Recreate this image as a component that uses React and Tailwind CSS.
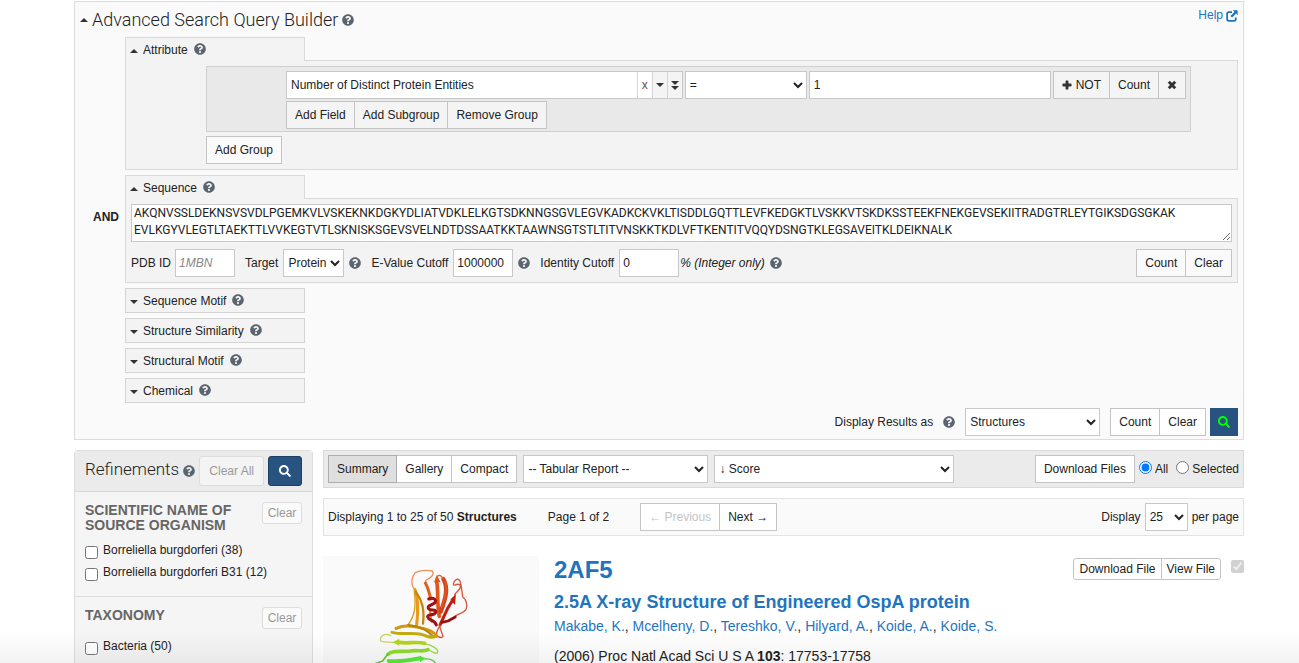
import React from "react";
import { FaQuestionCircle, FaSearch } from "react-icons/fa";

const SEQUENCE = [
  "AKQNVSSLDEKNSVSVDLPGEMKVLVSKEKNKDGKYDLIATVDKLELKGTSDKNNGSGVLEGVKADKCKVKLTISDDLGQTTLEVFKEDGKTLVSKKVTSKDKSSTEEKFNEKGEVSEKIITRADGTRLEYTGIKSDGSGKAK",
  "EVLKGYVLEGTLTAEKTTLVVKEGTVTLSKNISKSGEVSVELNDTDSSAATKKTAAWNSGTSTLTITVNSKKTKDLVFTKENTITVQQYDSNGTKLEGSAVEITKLDEIKNALK",
].join("\n");

const btn = "h-7 shrink-0 whitespace-nowrap border border-[#c4c4c4] px-2";
const field = "h-7 border border-[#c8c8c8] bg-white";
const select = "h-7 border border-[#c8c8c8] bg-white";
const heading = "font-['Roboto','Liberation_Sans',sans-serif]";

function HelpIcon({ label }) {
  return (
    <button type="button" aria-label={label} className="shrink-0 text-[#5b6570]">
      <FaQuestionCircle className="size-3" />
    </button>
  );
}

function PlusIcon() {
  return (
    <svg viewBox="0 0 10 10" className="size-[10px]" fill="#333" aria-hidden="true">
      <path d="M3.6 1.1Q3.6 .5 4.2 .5H5.8Q6.4 .5 6.4 1.1V3.6H8.9Q9.5 3.6 9.5 4.2V5.8Q9.5 6.4 8.9 6.4H6.4V8.9Q6.4 9.5 5.8 9.5H4.2Q3.6 9.5 3.6 8.9V6.4H1.1Q.5 6.4 .5 5.8V4.2Q.5 3.6 1.1 3.6H3.6Z" />
    </svg>
  );
}

function RemoveIcon() {
  return (
    <svg viewBox="0 0 10 10" className="size-[10px]" stroke="#333" strokeWidth="2.9" aria-hidden="true">
      <path d="M1.8 1.8L8.2 8.2M8.2 1.8L1.8 8.2" />
    </svg>
  );
}

function ExternalIcon() {
  return (
    <svg viewBox="0 0 13 13" className="size-3" fill="none" aria-hidden="true">
      <path d="M6.5 2.3H3.2Q1.2 2.3 1.2 4.3V9.8Q1.2 11.8 3.2 11.8H8.6Q10.6 11.8 10.6 9.8V8" stroke="currentColor" strokeWidth="1.9" />
      <path d="M7.4 .4H12.6V5.6L10.9 3.9L6.6 8.2L4.8 6.4L9.1 2.1Z" fill="currentColor" />
    </svg>
  );
}

function Caret({ up = false }) {
  return (
    <svg viewBox="0 0 8 4" className="h-1 w-2 shrink-0" fill="#333" aria-hidden="true">
      <path d={up ? "M0 4L4 0L8 4Z" : "M0 0H8L4 4Z"} />
    </svg>
  );
}

function TabLabel({ label, open }) {
  return (
    <div className="flex items-start gap-[6px]">
      <button type="button" aria-expanded={open} className="flex items-center gap-[5px] pt-px">
        <Caret up={open} />
        <span>{label}</span>
      </button>
      <div className="flex h-4 items-center">
        <HelpIcon label={"About " + label} />
      </div>
    </div>
  );
}

function OpenSection({ label, children }) {
  return (
    <section>
      <div className="flex">
        <div className="h-6 w-[180px] border-x border-t border-[#dadada] bg-[#f3f3f3] px-1 pt-[3px]">
          <TabLabel label={label} open />
        </div>
        <div className="flex-1 border-b border-[#dadada]" />
      </div>
      <div className="border-x border-b border-[#dadada] bg-[#f3f3f3] p-[5px]">{children}</div>
    </section>
  );
}

function AttributeSection() {
  return (
    <OpenSection label="Attribute">
      <div className="ml-[75px] mr-[41px]">
        <div className="flex flex-col gap-[2px] border border-[#cfcfcf] bg-[#e9e9e9] pt-1 pr-1 pb-[2px] pl-[79px]">
          <div className="flex gap-[2px]">
            <div className="flex h-7 flex-[395] border border-[#c8c8c8] bg-white">
              <input aria-label="Attribute" defaultValue="Number of Distinct Protein Entities" className="min-w-0 flex-1 px-1" />
              <button type="button" aria-label="Clear attribute" className="w-[15px] border-l border-[#d5d5d5] text-[#555]">x</button>
              <button type="button" aria-label="Choose attribute" className="flex w-[15px] items-center justify-center border-l border-[#d5d5d5] bg-[#f4f4f4]">
                <Caret />
              </button>
              <button type="button" aria-label="All attributes" className="flex w-[15px] flex-col items-center justify-center gap-px border-l border-[#d5d5d5] bg-[#f4f4f4]">
                <Caret />
                <Caret />
              </button>
            </div>
            <select aria-label="Operator" className={select + " w-[122px]"}>
              <option>=</option>
            </select>
            <input aria-label="Value" defaultValue="1" className={field + " min-w-0 flex-[232] px-1"} />
            <div className="flex">
              <button type="button" className={btn + " flex items-center gap-1 bg-[#f4f4f4]"}>
                <PlusIcon /> NOT
              </button>
              <button type="button" className={btn + " -ml-px bg-[#f4f4f4]"}>Count</button>
              <button type="button" aria-label="Remove field" className={btn + " -ml-px bg-[#f4f4f4]"}>
                <RemoveIcon />
              </button>
            </div>
          </div>
          <div className="flex">
            <button type="button" className={btn + " bg-[#f4f4f4]"}>Add Field</button>
            <button type="button" className={btn + " -ml-px bg-[#f4f4f4]"}>Add Subgroup</button>
            <button type="button" className={btn + " -ml-px bg-[#f4f4f4]"}>Remove Group</button>
          </div>
        </div>
        <button type="button" className={btn + " mt-1 block bg-[#fafafa]"}>Add Group</button>
      </div>
    </OpenSection>
  );
}

function SequenceSection() {
  return (
    <div className="relative">
      <strong className="absolute top-[34px] -left-8">AND</strong>
      <OpenSection label="Sequence">
        <textarea
          aria-label="Sequence"
          defaultValue={SEQUENCE}
          className={heading + " block h-[38px] w-full resize-y overflow-hidden border border-[#c8c8c8] bg-white px-[2px] leading-[17px] break-all"}
        />
        <div className="mt-[7px] flex items-center">
          <label htmlFor="pdb">PDB ID</label>
          <input id="pdb" placeholder="1MBN" className={field + " ml-1 w-[60px] px-[3px] placeholder:text-[#888] placeholder:italic"} />
          <label htmlFor="target" className="ml-[10px]">Target</label>
          <select id="target" className={select + " mr-[5px] ml-[5px] w-[61px]"}>
            <option>Protein</option>
          </select>
          <HelpIcon label="About target" />
          <label htmlFor="evalue" className="ml-[10px]">E-Value Cutoff</label>
          <input id="evalue" defaultValue="1000000" className={field + " mr-[5px] ml-[5px] w-[60px] px-[3px]"} />
          <HelpIcon label="About e-value" />
          <label htmlFor="identity" className="ml-[10px]">Identity Cutoff</label>
          <input id="identity" defaultValue="0" className={field + " ml-[5px] w-[60px] px-[3px]"} />
          <em className="mr-[5px] pl-px">% (Integer only)</em>
          <HelpIcon label="About identity" />
          <div className="ml-auto flex">
            <button type="button" className={btn + " bg-[#fafafa]"}>Count</button>
            <button type="button" className={btn + " -ml-px bg-[#fafafa]"}>Clear</button>
          </div>
        </div>
      </OpenSection>
    </div>
  );
}

function QueryBuilder() {
  return (
    <section className="border border-[#ddd] bg-[#fafafa] px-[5px] pb-[3px]">
      <header className="flex h-[35px] items-start justify-between">
        <div className="flex items-center gap-1 pt-[5px]">
          <Caret up />
          <h1 className={heading + " text-lg leading-[26px] font-light"}>Advanced Search Query Builder</h1>
          <HelpIcon label="About the query builder" />
        </div>
        <a href="#help" className="flex items-center gap-[3px] pt-[5px] text-[#1f75bd]">
          Help <ExternalIcon />
        </a>
      </header>
      <div className="ml-[45px] flex flex-col gap-[5px]">
        <AttributeSection />
        <SequenceSection />
        {["Sequence Motif", "Structure Similarity", "Structural Motif", "Chemical"].map((name) => (
          <div key={name} className="h-[25px] w-[180px] border border-[#d4d4d4] bg-[#f3f3f3] px-1 pt-[3px]">
            <TabLabel label={name} open={false} />
          </div>
        ))}
        <div className="flex items-center justify-end">
          <label htmlFor="results-as" className="mr-[10px]">Display Results as</label>
          <HelpIcon label="About result types" />
          <select id="results-as" className={select + " ml-[10px] w-[135px]"}>
            <option>Structures</option>
          </select>
          <button type="button" className={btn + " ml-[10px] bg-white"}>Count</button>
          <button type="button" className={btn + " mr-1 -ml-px bg-white"}>Clear</button>
          <button type="button" aria-label="Search" className="flex size-7 items-center justify-center bg-[#28527f] text-[#0f0]">
            <FaSearch className="size-3" />
          </button>
        </div>
      </div>
    </section>
  );
}

function Refinement({ title, items }) {
  return (
    <section className="border-b border-[#ddd] px-[10px] pt-[10px] pb-[13px]">
      <div className="mb-[6px] flex items-start justify-between">
        <h3 className="pt-px text-sm leading-[15px] font-bold text-[#666]">{title}</h3>
        <button type="button" className="h-[22px] w-10 shrink-0 rounded-[3px] border border-[#ddd] bg-[#fafafa] text-[#999]">Clear</button>
      </div>
      {items.map((item) => (
        <label key={item} className="flex h-[22px] items-center gap-[5px]">
          <input type="checkbox" className="mt-1 size-[13px]" /> {item}
        </label>
      ))}
    </section>
  );
}

function Refinements() {
  return (
    <aside className="w-[239px] shrink-0 rounded-t border border-[#ddd] bg-[#f5f5f5]">
      <header className="flex h-[41px] items-center border-b border-[#d8d8d8] bg-[#ebebeb] px-[10px]">
        <h2 className={heading + " mr-1 pb-1 text-[17px] leading-6 font-light"}>Refinements</h2>
        <HelpIcon label="About refinements" />
        <button type="button" className="ml-auto h-[30px] shrink-0 rounded-[3px] border border-[#ddd] bg-[#f4f4f4] px-[9px] text-[#999]">Clear All</button>
        <button type="button" aria-label="Apply refinements" className="ml-1 flex h-[30px] w-[34px] items-center justify-center rounded-[3px] border border-[#1c3f66] bg-[#28527f] text-white">
          <FaSearch className="size-3" />
        </button>
      </header>
      <Refinement title={<>SCIENTIFIC NAME OF<br />SOURCE ORGANISM</>} items={["Borreliella burgdorferi (38)", "Borreliella burgdorferi B31 (12)"]} />
      <Refinement title="TAXONOMY" items={["Bacteria (50)"]} />
    </aside>
  );
}

function Toolbar() {
  return (
    <div className="flex h-[38px] items-center border border-[#dadada] bg-[#ebebeb] px-1">
      <button type="button" aria-pressed="true" className="h-7 border border-[#adadad] bg-[#dfdfdf] px-2">Summary</button>
      <button type="button" className={btn + " border-l-0 bg-white"}>Gallery</button>
      <button type="button" className={btn + " -ml-px bg-white"}>Compact</button>
      <select aria-label="Tabular report" className={select + " ml-[6px] w-[185px]"}>
        <option>-- Tabular Report --</option>
      </select>
      <select aria-label="Sort by" className={select + " ml-[6px] w-[240px]"}>
        <option>↓ Score</option>
      </select>
      <button type="button" className={btn + " mr-1 ml-auto bg-white"}>Download Files</button>
      <label className="flex items-center gap-[3px]">
        <input type="radio" name="files" defaultChecked className="mb-1 size-[13px]" /> All
      </label>
      <label className="ml-2 flex items-center gap-[3px]">
        <input type="radio" name="files" className="mb-1 size-[13px]" /> Selected
      </label>
    </div>
  );
}

function Pager() {
  return (
    <div className="mt-[10px] flex h-[38px] items-center border border-[#e3e3e3] bg-[#fafafa] px-1">
      <span className="mr-[31px]">Displaying 1 to 25 of 50 <strong>Structures</strong></span>
      <span className="mr-[31px]">Page 1 of 2</span>
      <button type="button" disabled className={btn + " bg-white text-[#c4c4c4]"}>← Previous</button>
      <button type="button" className={btn + " -ml-px bg-white"}>Next →</button>
      <label htmlFor="per-page" className="mr-1 ml-auto">Display</label>
      <select id="per-page" className={select + " mr-1 w-[43px]"}>
        <option>25</option>
      </select>
      <span>per page</span>
    </div>
  );
}

function ProteinRibbon() {
  return (
    <svg viewBox="9 333 648 648" className="size-[216px] shrink-0 bg-[#fafafa]" fill="none" strokeLinecap="round" strokeLinejoin="round" role="img" aria-label="Ribbon view of 2AF5">
      <path d="M283 432C270 415 276 394 286 383C296 376 320 375 337 378C343 386 336 395 328 400C317 404 313 408 320 418" stroke="#f0905a" strokeWidth="4" />
      <path d="M285 434C294 458 296 486 290 540" stroke="#e89a18" strokeWidth="9" />
      <path d="M287 440C306 466 314 490 309 536" stroke="#c98310" strokeWidth="7" />
      <path d="M283 440C288 480 286 510 264 540L228 552" stroke="#d6a018" strokeWidth="4" />
      <path d="M316 414C325 430 328 442 332 462" stroke="#e0601c" strokeWidth="9" />
      <path d="M330 500L334 530" stroke="#d87c30" strokeWidth="6" />
      <path d="M350 410C356 440 350 480 358 514" stroke="#e2561a" strokeWidth="11" />
      <path d="M342 412L350 390L362 412Z" fill="#e2561a" />
      <path d="M370 402C384 426 380 454 362 500" stroke="#d2441a" strokeWidth="13" />
      <path d="M352 394C358 388 364 392 370 402" stroke="#e0602e" strokeWidth="4" />
      <path d="M376 410C382 430 378 456 364 488" stroke="#f07040" strokeWidth="2" />
      <path d="M326 462C340 456 352 464 344 474C334 482 322 480 325 490C330 500 350 490 347 502C342 514 322 504 323 516C326 528 344 522 349 540" stroke="#9e1212" strokeWidth="9" />
      <path d="M400 462L384 488L360 540" stroke="#c41c10" strokeWidth="9" />
      <path d="M391 464L408 446L405 480Z" fill="#c41c10" />
      <path d="M404 448C414 436 426 430 420 420C410 412 402 426 400 418C402 404 414 398 420 408C426 428 426 442 428 456C438 462 444 480 438 494C430 506 414 506 405 514" stroke="#d5553c" strokeWidth="4" />
      <path d="M406 516L384 528L366 532" stroke="#931010" strokeWidth="8" />
      <path d="M360 542C350 556 346 570 354 574C364 580 374 578 366 566L359 544" stroke="#cf553d" strokeWidth="4" />
      <path d="M228 550C250 540 276 542 300 548C322 554 342 558 350 574" stroke="#d19a12" strokeWidth="9" />
      <path d="M265 540C290 542 318 552 342 576" stroke="#b98208" strokeWidth="6" />
      <path d="M216 562C244 570 276 562 304 568C320 574 334 580 346 574" stroke="#c2ac12" strokeWidth="9" />
      <path d="M212 572C194 562 178 574 182 588C196 594 208 590 220 592" stroke="#c9d65a" strokeWidth="4" />
      <path d="M234 591C260 598 286 588 314 595" stroke="#b5d51c" strokeWidth="11" />
      <path d="M218 592L238 581L238 602Z" fill="#b5d51c" />
      <path d="M314 596C336 600 360 614 352 624C344 628 338 618 326 616" stroke="#a4dc4a" strokeWidth="4" />
      <path d="M204 628C216 614 242 622 270 618C292 614 310 622 324 614" stroke="#8fdc2c" strokeWidth="11" />
      <path d="M204 626L188 648L164 656" stroke="#65cc30" strokeWidth="5" />
      <path d="M206 648C232 650 270 646 300 640" stroke="#5ae83a" strokeWidth="12" />
      <path d="M298 632L318 640L300 652Z" fill="#5ae83a" />
      <path d="M316 642C332 640 350 650 348 664" stroke="#5ad848" strokeWidth="4" />
    </svg>
  );
}

const AUTHORS = ["Makabe, K.", "Mcelheny, D.", "Tereshko, V.", "Hilyard, A.", "Koide, A.", "Koide, S."];

function Result() {
  return (
    <article className="mt-5 flex">
      <ProteinRibbon />
      <div className="min-w-0 flex-1 pl-[15px]">
        <div className="flex items-start justify-between">
          <h2 className="text-2xl leading-7 font-bold text-[#1f75bd]"><a href="#2AF5">2AF5</a></h2>
          <div className="flex items-start pt-[2px]">
            <button type="button" className="h-[22px] rounded-l-[3px] border border-[#c4c4c4] bg-white px-[5px]">Download File</button>
            <button type="button" className="-ml-px h-[22px] rounded-r-[3px] border border-[#c4c4c4] bg-white px-[5px]">View File</button>
            <input type="checkbox" aria-label="Select 2AF5" defaultChecked disabled className="mt-[2px] ml-[10px] size-[13px]" />
          </div>
        </div>
        <h3 className="mt-2 text-lg leading-5 font-bold text-[#1f75bd]"><a href="#2AF5">2.5A X-ray Structure of Engineered OspA protein</a></h3>
        <p className="mt-1 text-sm leading-5">
          {AUTHORS.map((a, i) => (
            <React.Fragment key={a}>
              {i > 0 && ", "}
              <a href="#author" className="text-[#1f75bd]">{a}</a>
            </React.Fragment>
          ))}
        </p>
        <p className="mt-[10px] text-sm leading-5">(2006) Proc Natl Acad Sci U S A <strong>103</strong>: 17753-17758</p>
      </div>
    </article>
  );
}

export default function App() {
  return (
    <div className="relative h-screen overflow-hidden bg-white pt-px pr-[55px] pl-[74px] font-['Liberation_Sans',Arial,sans-serif] text-xs leading-[17px] text-[#222]">
      <QueryBuilder />
      <div className="mt-[10px] flex gap-[10px]">
        <Refinements />
        <main className="min-w-0 flex-1">
          <Toolbar />
          <Pager />
          <Result />
        </main>
      </div>
      <div className="pointer-events-none absolute inset-x-0 bottom-0 h-8 bg-linear-to-b from-transparent to-black/5" />
    </div>
  );
}
